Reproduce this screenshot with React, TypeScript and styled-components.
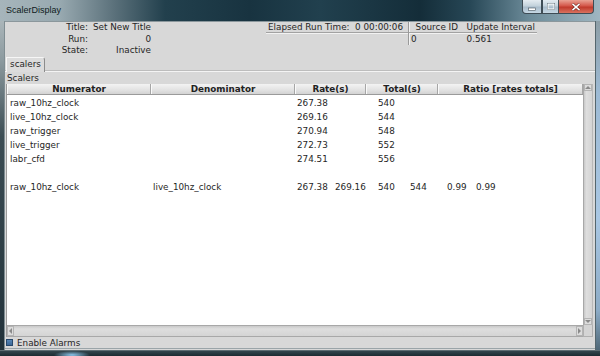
import styled, { createGlobalStyle } from 'styled-components'

const GlobalStyle = createGlobalStyle`
  html, body {
    margin: 0;
    padding: 0;
    background: #1b2a31;
  }
  body {
    width: 600px;
    height: 356px;
    overflow: hidden;
  }
  * {
    box-sizing: border-box;
  }
`

const Window = styled.div`
  width: 600px;
  height: 356px;
  display: flex;
  flex-direction: column;
  overflow: hidden;
  font-family: 'DejaVu Sans', 'Liberation Sans', sans-serif;
  font-size: 8.8px;
  color: #262626;
`

const TitleBar = styled.div`
  height: 21px;
  display: flex;
  align-items: flex-start;
  background: linear-gradient(
    90deg,
    #a6b5bb 0px,
    #98a9b0 60px,
    #5a707a 115px,
    #22404d 165px,
    #183340 250px,
    #21404e 320px,
    #142d39 420px,
    #274756 470px,
    #6d8c9a 530px,
    #9fb6c1 600px
  );
`

const TitleText = styled.span`
  padding: 5px 0 0 6px;
  font-family: 'Liberation Sans', Arial, sans-serif;
  font-size: 9px;
  line-height: 11px;
  color: #0f1b21;
`

const WindowButtons = styled.div`
  margin-left: auto;
  margin-right: 6px;
  display: flex;
  height: 14px;
`

const WinButton = styled.div<{ $w: number; $close?: boolean }>`
  width: ${p => p.$w}px;
  height: 14px;
  display: flex;
  align-items: center;
  justify-content: center;
  border: 1px solid #3e4c55;
  border-top: none;
  border-left: ${p => (p.$close ? 'none' : '1px solid #3e4c55')};
  background: ${p =>
    p.$close
      ? 'linear-gradient(180deg, #e9a294 0%, #d4574a 45%, #c03a2c 55%, #d9725f 100%)'
      : 'linear-gradient(180deg, #e4ecf1 0%, #c3d2dc 45%, #a9bccb 55%, #c6d8e4 100%)'};
  &:first-child {
    border-bottom-left-radius: 4px;
  }
  &:last-child {
    border-bottom-right-radius: 4px;
  }
`

const BodyRow = styled.div`
  flex: 1;
  display: flex;
  min-height: 0;
`

const LeftFrame = styled.div`
  width: 5px;
  background: linear-gradient(180deg, #aab5b9 0%, #8c9a9f 12%, #3c4d54 35%, #22323a 100%);
  border-right: 1px solid #7f8d92;
`

const RightFrame = styled.div`
  width: 5px;
  border-left: 1px solid #55666d;
  background: linear-gradient(180deg, #8d9ea6 0%, #9dbad4 22%, #a9c7e3 60%, #8cabc6 88%, #4f6878 100%);
`

const BottomFrame = styled.div`
  height: 6px;
  background:
    radial-gradient(ellipse 18px 4px at 72px 4px, #8cc6ec 0%, rgba(140, 198, 236, 0) 100%),
    linear-gradient(180deg, #33454d 0%, #1c2b32 100%);
  border-top: 1px solid #5d6c72;
`

const Content = styled.div`
  flex: 1;
  display: flex;
  flex-direction: column;
  background: #d8d8d8;
  border-top: 1px solid #8b979c;
  min-width: 0;
`

const InfoArea = styled.div`
  height: 35px;
  display: flex;
  align-items: flex-start;
`

const InfoGrid = styled.div`
  display: grid;
  grid-template-columns: 83px 63px;
  grid-auto-rows: 11.5px;
  line-height: 11.5px;
`

const InfoLabel = styled.span`
  text-align: right;
`

const InfoValue = styled.span`
  text-align: right;
  white-space: nowrap;
`

const ElapsedBox = styled.div`
  margin-left: 115px;
  width: 142px;
`

const MiniHeader = styled.div`
  height: 11px;
  line-height: 11px;
  display: flex;
  border-bottom: 1px solid #a2a2a2;
  box-shadow: 0 1px 0 #f2f2f2;
  white-space: pre;
`

const MiniHeaderText = styled.span<{ $w?: number; $center?: boolean }>`
  width: ${p => (p.$w ? `${p.$w}px` : 'auto')};
  padding-left: ${p => (p.$center ? 0 : 2)}px;
  text-align: ${p => (p.$center ? 'center' : 'left')};
`

const SourceBox = styled.div`
  border-left: 1px solid #9a9a9a;
  box-shadow: inset 1px 0 0 #f2f2f2;
  height: 23px;
  width: 129px;
`

const MiniRow = styled.div`
  display: flex;
  height: 12px;
  line-height: 13px;
`

const MiniCell = styled.span<{ $w: number }>`
  width: ${p => p.$w}px;
  padding-left: 2px;
`

const TabStrip = styled.div`
  height: 15px;
  display: flex;
  align-items: flex-end;
  border-bottom: 1px solid #f4f4f4;
  box-shadow: 0 -1px 0 #bdbdbd inset;
`

const Tab = styled.div`
  margin-left: 1px;
  width: 39px;
  height: 15px;
  line-height: 13px;
  text-align: center;
  background: #dcdcdc;
  border-top: 1px solid #f6f6f6;
  border-left: 1px solid #f6f6f6;
  border-right: 1px solid #8c8c8c;
  border-top-right-radius: 3px;
  margin-bottom: -1px;
  position: relative;
`

const SectionLabel = styled.div`
  height: 12px;
  line-height: 12px;
  padding-left: 2px;
`

const TableFrame = styled.div`
  height: 253px;
  margin: 0 2px 0 1px;
  display: flex;
  flex-direction: column;
  border-left: 1px solid #9c9c9c;
`

const TableTop = styled.div`
  flex: 1;
  display: flex;
  min-height: 0;
`

const Viewport = styled.div`
  flex: 1;
  display: flex;
  flex-direction: column;
  min-width: 0;
`

const HeaderRow = styled.div`
  height: 11px;
  display: flex;
  border-bottom: 1px solid #9a9a9a;
`

const HeaderCell = styled.div<{ $w: number; $last?: boolean }>`
  width: ${p => p.$w}px;
  flex: ${p => (p.$last ? '1' : 'none')};
  height: 10px;
  line-height: 10px;
  text-align: center;
  font-weight: bold;
  color: #222;
  background: linear-gradient(180deg, #f3f3f3 0%, #e2e2e2 60%, #d3d3d3 100%);
  border-left: 1px solid #fafafa;
  border-right: 1px solid #a6a6a6;
  white-space: nowrap;
  overflow: hidden;
`

const TableBody = styled.div`
  flex: 1;
  background: #ffffff;
  padding-top: 1px;
`

const Row = styled.div`
  height: 14px;
  line-height: 14px;
  display: flex;
  white-space: nowrap;
`

const Cell = styled.div<{ $w: number; $pad: number }>`
  width: ${p => p.$w}px;
  padding-left: ${p => p.$pad}px;
  display: flex;
  overflow: hidden;
`

const Value = styled.span<{ $w: number }>`
  width: ${p => p.$w}px;
  flex: none;
`

const VScroll = styled.div`
  width: 10px;
  display: flex;
  flex-direction: column;
  justify-content: space-between;
  background: linear-gradient(90deg, #c8c8c8 0%, #dedede 30%, #d4d4d4 100%);
  border-left: 1px solid #a8a8a8;
  border-right: 1px solid #b8b8b8;
`

const HScrollRow = styled.div`
  height: 12px;
  display: flex;
`

const HScroll = styled.div`
  flex: 1;
  display: flex;
  align-items: center;
  justify-content: space-between;
  background: linear-gradient(180deg, #c9c9c9 0%, #dedede 30%, #d4d4d4 100%);
  border-top: 1px solid #a8a8a8;
  border-bottom: 1px solid #a8a8a8;
`

const Corner = styled.div`
  width: 10px;
  background: #d4d4d4;
  border: 1px solid #b0b0b0;
  border-top: none;
`

const ArrowBtn = styled.div<{ $h: number; $w: number }>`
  width: ${p => p.$w}px;
  height: ${p => p.$h}px;
  display: flex;
  align-items: center;
  justify-content: center;
  background: #dcdcdc;
  border: 1px solid #b4b4b4;
`

const Footer = styled.div`
  height: 12px;
  display: flex;
  align-items: center;
  padding-left: 1px;
  gap: 4px;
  border-bottom: 1px solid #9aa4a8;
`

const CheckBox = styled.span`
  width: 7px;
  height: 7px;
  background: linear-gradient(180deg, #5786b6 0%, #3a6797 100%);
  border: 1px solid #27486b;
`

const FooterText = styled.span`
  line-height: 12px;
`

const Triangle = ({ dir }: { dir: 'up' | 'down' | 'left' | 'right' }) => {
  const pts = {
    up: '0,4 3,1 6,4',
    down: '0,1 3,4 6,1',
    left: '4,0 1,3 4,6',
    right: '1,0 4,3 1,6',
  }[dir]
  const vertical = dir === 'up' || dir === 'down'
  return (
    <svg width={vertical ? 6 : 5} height={vertical ? 5 : 6} viewBox={vertical ? '0 0 6 5' : '0 0 5 6'}>
      <polygon points={pts} fill="#8a8a8a" />
    </svg>
  )
}

const columns = [
  { label: 'Numerator', w: 144, pad: 3 },
  { label: 'Denominator', w: 144, pad: 2 },
  { label: 'Rate(s)', w: 71, pad: 2 },
  { label: 'Total(s)', w: 72, pad: 12 },
  { label: 'Ratio [rates totals]', w: 145, pad: 9 },
]

const valueWidths = [0, 0, 38, 32, 29]

interface ScalerRow {
  num: string
  den: string
  rate: string[]
  total: string[]
  ratio: string[]
}

const rows: ScalerRow[] = [
  { num: 'raw_10hz_clock', den: '', rate: ['267.38'], total: ['540'], ratio: [] },
  { num: 'live_10hz_clock', den: '', rate: ['269.16'], total: ['544'], ratio: [] },
  { num: 'raw_trigger', den: '', rate: ['270.94'], total: ['548'], ratio: [] },
  { num: 'live_trigger', den: '', rate: ['272.73'], total: ['552'], ratio: [] },
  { num: 'labr_cfd', den: '', rate: ['274.51'], total: ['556'], ratio: [] },
  { num: '', den: '', rate: [], total: [], ratio: [] },
  {
    num: 'raw_10hz_clock',
    den: 'live_10hz_clock',
    rate: ['267.38', '269.16'],
    total: ['540', '544'],
    ratio: ['0.99', '0.99'],
  },
]

export default function App() {
  return (
    <>
      <GlobalStyle />
      <Window>
        <TitleBar>
          <TitleText>ScalerDisplay</TitleText>
          <WindowButtons>
            <WinButton $w={20}>
              <svg width="8" height="8" viewBox="0 0 8 8">
                <rect x="0.5" y="5" width="7" height="2.5" fill="#fff" stroke="#43535d" strokeWidth="0.6" />
              </svg>
            </WinButton>
            <WinButton $w={17}>
              <svg width="8" height="7" viewBox="0 0 8 7">
                <rect x="0.8" y="0.8" width="6.4" height="5.4" fill="none" stroke="#fff" strokeWidth="1.4" />
                <rect x="0.2" y="0.2" width="7.6" height="6.6" fill="none" stroke="#43535d" strokeWidth="0.4" />
              </svg>
            </WinButton>
            <WinButton $w={35} $close>
              <svg width="10" height="8" viewBox="0 0 10 8">
                <path d="M1.5 0.8 L8.5 7.2 M8.5 0.8 L1.5 7.2" stroke="#5a1810" strokeWidth="2.6" />
                <path d="M1.5 0.8 L8.5 7.2 M8.5 0.8 L1.5 7.2" stroke="#fff" strokeWidth="1.6" />
              </svg>
            </WinButton>
          </WindowButtons>
        </TitleBar>
        <BodyRow>
          <LeftFrame />
          <Content>
            <InfoArea>
              <InfoGrid>
                <InfoLabel>Title:</InfoLabel>
                <InfoValue>Set New Title</InfoValue>
                <InfoLabel>Run:</InfoLabel>
                <InfoValue>0</InfoValue>
                <InfoLabel>State:</InfoLabel>
                <InfoValue>Inactive</InfoValue>
              </InfoGrid>
              <ElapsedBox>
                <MiniHeader>
                  <MiniHeaderText>Elapsed Run Time:  0 00:00:06</MiniHeaderText>
                </MiniHeader>
              </ElapsedBox>
              <SourceBox>
                <MiniHeader>
                  <MiniHeaderText $w={56} $center>
                    Source ID
                  </MiniHeaderText>
                  <MiniHeaderText $w={73}>Update Interval</MiniHeaderText>
                </MiniHeader>
                <MiniRow>
                  <MiniCell $w={56}>0</MiniCell>
                  <MiniCell $w={73}>0.561</MiniCell>
                </MiniRow>
              </SourceBox>
            </InfoArea>
            <TabStrip>
              <Tab>scalers</Tab>
            </TabStrip>
            <SectionLabel>Scalers</SectionLabel>
            <TableFrame>
              <TableTop>
                <Viewport>
                  <HeaderRow>
                    {columns.map((c, i) => (
                      <HeaderCell key={c.label} $w={c.w} $last={i === columns.length - 1}>
                        {c.label}
                      </HeaderCell>
                    ))}
                  </HeaderRow>
                  <TableBody>
                    {rows.map((r, idx) => {
                      const cells = [[r.num], [r.den], r.rate, r.total, r.ratio]
                      return (
                        <Row key={idx}>
                          {columns.map((c, i) => (
                            <Cell key={c.label} $w={c.w} $pad={c.pad}>
                              {cells[i].map((v, j) => (
                                <Value key={j} $w={valueWidths[i] || c.w}>
                                  {v}
                                </Value>
                              ))}
                            </Cell>
                          ))}
                        </Row>
                      )
                    })}
                  </TableBody>
                </Viewport>
                <VScroll>
                  <ArrowBtn $w={8} $h={7}>
                    <Triangle dir="up" />
                  </ArrowBtn>
                  <ArrowBtn $w={8} $h={7}>
                    <Triangle dir="down" />
                  </ArrowBtn>
                </VScroll>
              </TableTop>
              <HScrollRow>
                <HScroll>
                  <ArrowBtn $w={7} $h={10}>
                    <Triangle dir="left" />
                  </ArrowBtn>
                  <ArrowBtn $w={7} $h={10}>
                    <Triangle dir="right" />
                  </ArrowBtn>
                </HScroll>
                <Corner />
              </HScrollRow>
            </TableFrame>
            <Footer>
              <CheckBox />
              <FooterText>Enable Alarms</FooterText>
            </Footer>
          </Content>
          <RightFrame />
        </BodyRow>
        <BottomFrame />
      </Window>
    </>
  )
}
